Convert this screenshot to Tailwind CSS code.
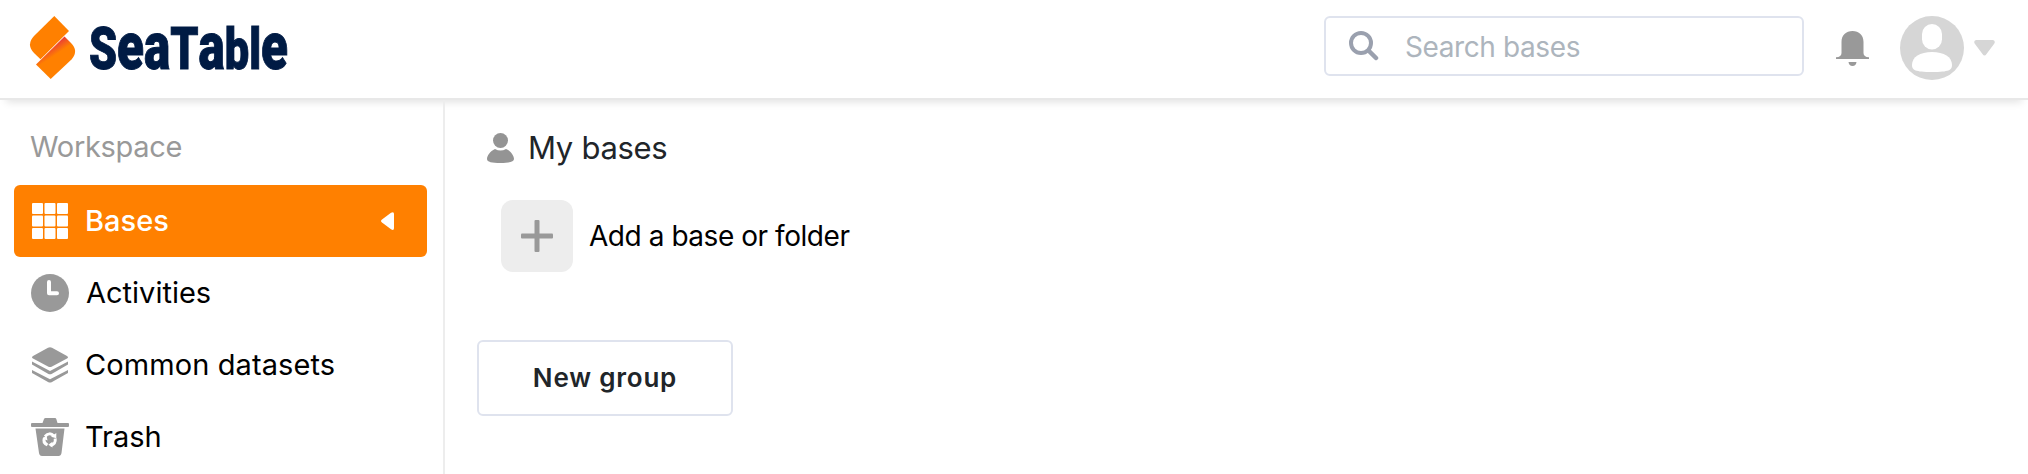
<!DOCTYPE html>
<html lang="en">
<head>
<meta charset="utf-8">
<title>SeaTable</title>
<script src="https://cdn.jsdelivr.net/npm/@tailwindcss/browser@4"></script>
</head>
<body class="h-[474px] overflow-hidden bg-white font-['Inter',sans-serif] text-black flex flex-col">
<header class="h-[100px] shrink-0 border-b-2 border-[#e8e8e8] shadow-[0_8px_8px_-6px_rgba(0,0,0,0.12)] flex items-start justify-between pl-[30px] pr-[33px] pt-4">
  <svg class="w-[260px] h-16 overflow-visible" viewBox="30 16 260 64" role="img" aria-label="SeaTable">
    <defs>
      <linearGradient id="fold" gradientUnits="userSpaceOnUse" x1="54" y1="42" x2="62" y2="54">
        <stop offset="0" stop-color="#e62e3a"/><stop offset=".25" stop-color="#ee4a2c"/><stop offset=".8" stop-color="#ff8000"/>
      </linearGradient>
    </defs>
    <path d="M64.500 36.500 L71 43 Q79 51 71.500 59.500 L50.700 79 L36 64.500Z" fill="url(#fold)"/>
    <path d="M54.300 16 L69 31 L40.500 59.200 L34 53 Q26 44.500 34 36Z" fill="#ff8000"/>
    <text y="69" x="89" textLength="199" lengthAdjust="spacingAndGlyphs" fill="#001b44" stroke="#001b44" stroke-width="1" font-family="Roboto" font-weight="900" font-size="60" font-kerning="none">S<tspan font-size="66">ea</tspan>T<tspan font-size="66">a</tspan><tspan font-size="58">bl</tspan><tspan font-size="66">e</tspan></text>
  </svg>
  <div class="flex items-start">
    <div class="w-[480px] h-[60px] rounded-md border-2 border-[#dfe3ee] flex items-center pl-[23px]">
      <svg class="w-[30px] h-[30px] shrink-0" viewBox="0 0 30 30" fill="none" stroke="#9aa0ae"><circle cx="12" cy="12" r="10" stroke-width="4"/><path d="M19.500 19.500L27 27" stroke-width="4.500" stroke-linecap="round"/></svg>
      <span class="ml-[26px] pt-0.5 text-[28px] leading-none tracking-[-0.4px] text-[#adb5bd] whitespace-nowrap">Search bases</span>
    </div>
    <svg class="ml-8 mt-[15px] w-[33px] h-[35px]" viewBox="0 0 33 35" fill="#999"><path d="M0 28V26.300Q5.500 26 5.500 22V11C5.500 4 10 0 16.500 0S27.500 4 27.500 11V22Q27.500 26 33 26.300V28ZM12.500 31H20.500Q20 35 16.500 35T12.500 31Z"/></svg>
    <svg class="ml-[31px] w-16 h-16" viewBox="0 0 64 64"><circle cx="32" cy="32" r="32" fill="#d6d6d6"/><rect x="22" y="8" width="20" height="25.500" rx="10" fill="#fff"/><path d="M12 49C12 41 20 36 32 36S52 41 52 49C52 54 49 56 32 56S12 54 12 49Z" fill="#fff"/></svg>
    <svg class="ml-[10px] mt-6 w-[21px] h-4" viewBox="0 0 21 16" fill="#d6d6d6"><path d="M2 0H19Q22 1 20 4L12.500 14Q10.500 17 8.500 14L1 4Q-1 1 2 0Z"/></svg>
  </div>
</header>
<div class="flex flex-1 min-h-0">
  <aside class="w-[445px] shrink-0 border-r-2 border-[#ededed] pl-[14px] pr-4 text-[29px] leading-none">
    <h2 class="h-[85px] pt-8 pl-4 text-[#999] tracking-[-0.3px]">Workspace</h2>
    <nav>
      <a class="h-[72px] rounded-md bg-[#ff8000] text-white flex items-center pl-[17px] pr-[33px]">
        <svg class="w-[38px] h-9" viewBox="0 0 38 36" fill="#fff"><rect x="1" width="11" height="11" rx="1"/><rect x="13.500" width="11" height="11" rx="1"/><rect x="26" width="11" height="11" rx="1"/><rect x="1" y="12.500" width="11" height="11" rx="1"/><rect x="13.500" y="12.500" width="11" height="11" rx="1"/><rect x="26" y="12.500" width="11" height="11" rx="1"/><rect x="1" y="25" width="11" height="11" rx="1"/><rect x="13.500" y="25" width="11" height="11" rx="1"/><rect x="26" y="25" width="11" height="11" rx="1"/></svg>
        <span class="ml-4 pb-px font-[450]">Bases</span>
        <svg class="ml-auto w-[13px] h-[18px]" viewBox="0 0 13 18" fill="#fff"><path d="M1 7.500L10 .8Q13-1 13 2V16Q13 19 10 17.200L1 10.500Q-1 9 1 7.500Z"/></svg>
      </a>
      <a class="h-[72px] flex items-center pl-[17px]">
        <svg class="w-[38px] h-[38px]" viewBox="0 0 38 38"><circle cx="19" cy="19" r="19" fill="#999"/><path d="M18 8V19.300H26" fill="none" stroke="#fff" stroke-width="4" stroke-linecap="round" stroke-linejoin="round"/></svg>
        <span class="ml-[17px] pb-px">Activities</span>
      </a>
      <a class="h-[72px] flex items-center pl-[17px]">
        <svg class="w-[38px] h-9" viewBox="0 0 38 36" fill="#999"><path d="M17 .7Q19-.4 21 .7L36 9Q38 10.300 36 11.600L21 19.500Q19 20.600 17 19.500L2 11.600Q0 10.300 2 9ZM1 14.500L19 24L37 14.500V17.500L21 26.700Q19 27.700 17 26.700L1 17.500ZM1 23L19 32.300L37 23V26L21 35Q19 36 17 35L1 26Z"/></svg>
        <span class="ml-4 pb-px tracking-[0.1px] whitespace-nowrap">Common datasets</span>
      </a>
      <a class="h-[72px] flex items-center pl-[17px]">
        <svg class="w-[38px] h-[38px] -mt-px" viewBox="0 0 38 38"><path d="M1 5H11.500L13 1Q13.500 0 14.500 0H24Q25 0 25.300 1L26.500 5H37Q38 5 38 6V8Q38 9 37 9H1Q0 9 0 8V6Q0 5 1 5ZM4.500 10.500H33.500L30.500 35Q30 38 27.500 38H11Q8.500 38 8 35Z" fill="#999"/><g fill="none" stroke="#fff" stroke-width="3"><path d="M14 18.500Q18.500 13.500 23 18"/><path d="M24.200 20.500Q25 26.500 19.500 27.200"/><path d="M16.500 27Q11.500 24.500 13.500 20"/></g><path d="M25.300 15V20.200L20 18.800ZM21.500 23.800V29.500L17.300 26.800ZM11.500 20.200L15.500 17.500 16.500 22.500Z" fill="#fff"/></svg>
        <span class="ml-4 pb-px">Trash</span>
      </a>
    </nav>
  </aside>
  <main class="flex-1 pl-8">
    <div class="pt-[30px] pl-[10px] h-[100px] flex items-start">
      <svg class="mt-[3px] w-[27px] h-[30px]" viewBox="0 0 27 30" fill="#949494"><circle cx="13.500" cy="7.500" r="7.500"/><path d="M8 16Q13.500 19 19 16C24 18 27 23 27 26C27 29 22 30 13.500 30S0 29 0 26C0 23 3 18 8 16Z"/></svg>
      <h1 class="ml-[14px] text-[31px] leading-9 tracking-[-0.3px] text-[#212529] whitespace-nowrap">My bases</h1>
    </div>
    <div class="ml-6 h-[72px] flex items-center">
      <div class="w-[72px] h-[72px] rounded-xl bg-[#ededed] grid place-items-center">
        <svg class="w-8 h-8" viewBox="0 0 32 32" fill="#999"><rect x="13.500" width="5" height="32" rx="1"/><rect y="13.500" width="32" height="5" rx="1"/></svg>
      </div>
      <span class="ml-4 text-[28px] leading-none tracking-[-0.45px] whitespace-nowrap">Add a base or folder</span>
    </div>
    <button class="mt-[68px] w-[256px] h-[76px] rounded-md border-2 border-[#dfe3ee] text-[26px] leading-none font-semibold tracking-[0.8px] text-[#212529] whitespace-nowrap">New group</button>
  </main>
</div>
</body>
</html>
